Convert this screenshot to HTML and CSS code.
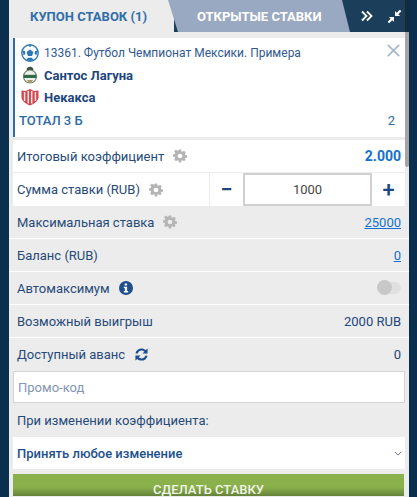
FILE: index.html
```html
<!DOCTYPE html>
<html lang="ru">
<head>
    <meta charset="utf-8" />
    <title>Купон ставок</title>
    <link rel="stylesheet" href="styles.css">
</head>
<body>
    <div class="panel">
        <div class="tabs">
            <div class="tab tab_active">КУПОН СТАВОК (1)</div>
            <div class="tab tab_open">ОТКРЫТЫЕ СТАВКИ</div>
            <div class="tab_tools">
                <svg class="tool_icon" viewBox="0 0 12 12"><path d="M1 1.500 5.500 6 1 10.500M6 1.500 10.500 6 6 10.500" fill="none" stroke="#fff" stroke-width="1.800"/></svg>
                <svg class="tool_icon tool_pin" viewBox="0 0 14 14"><path d="M7.500 6.500V1.800l1.600 1.600L12 .6l1.400 1.400-2.800 2.900 1.600 1.600zM6.500 7.500v4.700l-1.600-1.600L2 13.400.6 12l2.800-2.900-1.600-1.600z" fill="#fff"/></svg>
            </div>
        </div>

        <div class="coupon">
            <div class="coupon_line">
                <svg class="logo" viewBox="0 0 18 18">
                    <circle cx="9" cy="9" r="8.200" fill="#fff" stroke="#2a77b8" stroke-width="1.400"/>
                    <path d="M9 5.400 12.400 8l-1.300 3.900H6.900L5.600 8zM7 1.200 9 3.200l2-2zM1.500 6.500l2.400.6.500 2.700-1.800 1.700zM16.500 6.500l-2.400.6-.5 2.700 1.800 1.700zM5.400 15.800l1.800-2h3.600l1.800 2-3.600 1.200z" fill="#2a77b8"/>
                </svg>
                <span class="coupon_title">13361. Футбол Чемпионат Мексики. Примера</span>
            </div>
            <div class="coupon_line">
                <svg class="logo" viewBox="0 0 18 18">
                    <path d="M5.500 4.500C5.500 2 7 .8 9 .8s3.500 1.200 3.500 3.700z" fill="#3b4f3f"/>
                    <circle cx="9" cy="10.500" r="6.500" fill="#eef0ec" stroke="#6f8270" stroke-width="1.200"/>
                    <path d="M2.800 8.800h12.400v3.200H2.800z" fill="#2f6b46"/>
                    <path d="M6 14h6l-1.500 2.300h-3z" fill="#a89a5c"/>
                </svg>
                <span class="team">Сантос Лагуна</span>
            </div>
            <div class="coupon_line">
                <svg class="logo" viewBox="0 0 18 18">
                    <path d="M.5 2.500 5 3 9 1l4 2 4.500-.5v6.500c0 4-4 6.500-8.500 8.500C4.500 15.500.5 13 .5 9z" fill="#d6454c"/>
                    <path d="M3.600 4v9M7.300 3v12.500M10.700 3v12.500M14.400 4v9" stroke="#f4e6e6" stroke-width="1.500"/>
                </svg>
                <span class="team">Некакса</span>
            </div>
            <div class="coupon_total">
                <span>ТОТАЛ 3 Б</span>
                <span class="total_value">2</span>
            </div>
            <svg class="coupon_close" viewBox="0 0 13 13"><path d="M.8.8l11.400 11.400M12.200.8.800 12.200" stroke="#a8b9cc" stroke-width="1.800" fill="none"/></svg>
        </div>

        <div class="row row_white">
            <span class="row_label">Итоговый коэффициент
                <svg class="gear" viewBox="0 0 24 24"><use href="#gear"/></svg>
            </span>
            <span class="odds">2.000</span>
        </div>
        <div class="row row_white row_stake">
            <span class="row_label">Сумма ставки (RUB)
                <svg class="gear" viewBox="0 0 24 24"><use href="#gear"/></svg>
            </span>
            <div class="stepper">
                <span class="step">−</span>
                <span class="step_input">1000</span>
                <span class="step">+</span>
            </div>
        </div>
        <div class="row">
            <span class="row_label">Максимальная ставка
                <svg class="gear" viewBox="0 0 24 24"><use href="#gear"/></svg>
            </span>
            <a class="row_link" href="#">25000</a>
        </div>
        <div class="row">
            <span class="row_label">Баланс (RUB)</span>
            <a class="row_link" href="#">0</a>
        </div>
        <div class="row">
            <span class="row_label">Автомаксимум
                <svg class="info" viewBox="0 0 14 14">
                    <circle cx="7" cy="7" r="7" fill="#1c4f8c"/>
                    <path d="M5.700 2.500h2.400v2H5.700zM4.800 5.700h3.300v4.200h1.100v1.600H4.800V9.900h1.100V7.300H4.800z" fill="#fff"/>
                </svg>
            </span>
            <span class="toggle"><span class="toggle_knob"></span></span>
        </div>
        <div class="row">
            <span class="row_label">Возможный выигрыш</span>
            <span class="row_value">2000 RUB</span>
        </div>
        <div class="row row_last">
            <span class="row_label">Доступный аванс
                <svg class="refresh" viewBox="0 0 16 16">
                    <path d="M1.500 6.800C2.300 3.400 5 1.500 8 1.500c1.800 0 3.300.6 4.500 1.700L14.500 1.500v5.500H9l2-2C10.200 4.200 9.200 3.800 8 3.800c-1.900 0-3.400 1.200-3.900 3zM14.500 9.200c-.8 3.400-3.500 5.300-6.500 5.300-1.800 0-3.300-.6-4.500-1.700l-2 1.700V9H7l-2 2c.8.800 1.800 1.200 3 1.200 1.900 0 3.400-1.200 3.900-3z" fill="#1c4f8c"/>
                </svg>
            </span>
            <span class="row_value">0</span>
        </div>

        <div class="promo">Промо-код</div>
        <div class="change_label">При изменении коэффициента:</div>
        <div class="select">
            <span>Принять любое изменение</span>
            <svg class="select_arrow" viewBox="0 0 10 6"><path d="M1 1l4 4 4-4" fill="none" stroke="#5f6f80" stroke-width="1.200"/></svg>
        </div>
        <div class="submit">СДЕЛАТЬ СТАВКУ</div>

        <div class="scroll_thumb"></div>
    </div>

    <svg class="defs" width="0" height="0">
        <symbol id="gear" viewBox="0 0 24 24">
            <path fill-rule="evenodd" d="M10 1h4l.6 3.100 1.700.7L19 3l3 3-1.800 2.700.7 1.700 3.100.6v4l-3.100.6-.7 1.700L22 18l-3 3-2.700-1.800-1.700.7L14 23h-4l-.6-3.100-1.700-.7L5 21l-3-3 1.800-2.700-.7-1.700L0 13V9l3.100-.6.7-1.700L2 4l3-3 2.700 1.800 1.700-.7zM12 8a4 4 0 1 0 0 8 4 4 0 0 0 0-8z" fill="#b5b5b5"/>
        </symbol>
    </svg>
</body>
</html>
```

FILE: styles.css
```css
* {
    box-sizing: border-box;
}

html, body {
    height: 100%;
}

body {
    margin: 0;
    padding: 0 8px 0 9px;
    background-color: rgb(11, 47, 79);
    overflow: hidden;
    font-family: Roboto, "Liberation Sans", sans-serif;
    font-size: 13px;
    color: rgb(28, 70, 125);
}

.panel {
    position: relative;
    height: 100%;
    background-color: rgb(236, 236, 236);
    overflow: hidden;
}

.defs {
    position: absolute;
}

/* tabs */
.tabs {
    display: flex;
    height: 32px;
    background-color: rgb(27, 63, 90);
    font-weight: 700;
}

.tab {
    display: flex;
    align-items: center;
}

.tab_active {
    width: 165px;
    margin-right: -6px;
    padding-left: 21px;
    font-size: 13px;
    color: rgb(48, 110, 170);
    background-color: rgb(236, 236, 236);
}

.tab_open {
    width: 182px;
    padding-left: 29px;
    font-size: 13px;
    color: white;
    background-color: rgb(154, 169, 194);
    clip-path: polygon(0 0, 95.6% 0, 100% 100%, 5.5% 100%);
}

.tab_tools {
    display: flex;
    flex: 1;
    align-items: center;
    gap: 14px;
    padding-left: 11px;
}

.tool_icon {
    width: 12px;
    height: 12px;
}

.tool_pin {
    width: 15px;
    height: 15px;
}

/* coupon */
.coupon {
    position: relative;
    height: 99px;
    margin: 6px 4px 3px 4px;
    padding: 4px 10px 0 4px;
    background-color: white;
    border-left: 2px solid rgb(45, 110, 170);
}

.coupon_line {
    display: flex;
    align-items: center;
    gap: 5px;
    height: 22px;
    padding-left: 2px;
}

.logo {
    width: 18px;
    height: 18px;
    flex: none;
}

.coupon_title {
    font-size: 12px;
    color: rgb(48, 90, 145);
}

.team {
    font-size: 13px;
    font-weight: 700;
}

.coupon_total {
    display: flex;
    justify-content: space-between;
    margin-top: 5px;
    font-size: 13px;
    font-weight: 500;
    color: rgb(45, 105, 165);
}

.total_value {
    font-weight: 400;
}

.coupon_close {
    position: absolute;
    top: 6px;
    right: 5px;
    width: 13px;
    height: 13px;
}

/* rows */
.row {
    display: flex;
    align-items: center;
    justify-content: space-between;
    height: 33px;
    padding: 0 8px;
    border-bottom: 1px solid white;
}

.row_last {
    border-bottom: 0;
}

.row_white {
    margin: 0 4px;
    padding: 0 4px;
    background-color: white;
    border-bottom: 1px solid rgb(236, 236, 236);
}

.row_label {
    display: flex;
    align-items: center;
    gap: 9px;
    color: rgb(38, 74, 122);
}

.gear {
    width: 14px;
    height: 14px;
}

.info {
    width: 14px;
    height: 14px;
}

.refresh {
    width: 15px;
    height: 15px;
}

.odds {
    font-size: 14px;
    font-weight: 700;
    color: rgb(21, 112, 205);
}

.row_link {
    color: rgb(21, 112, 205);
}

.row_value {
    color: rgb(28, 70, 125);
}

/* stepper */
.row_stake {
    padding-right: 0;
    border-bottom: 0;
}

.stepper {
    display: flex;
    align-self: stretch;
    width: 196px;
    border-left: 1px solid rgb(236, 236, 236);
}

.step {
    display: flex;
    flex: 1;
    align-items: center;
    justify-content: center;
    font-size: 22px;
    font-weight: 500;
    color: rgb(28, 70, 125);
}

.step_input {
    display: flex;
    align-items: center;
    justify-content: center;
    width: 129px;
    border: 2px solid rgb(208, 208, 208);
    color: rgb(70, 70, 70);
    font-size: 13px;
}

/* toggle */
.toggle {
    position: relative;
    width: 24px;
    height: 12px;
    border-radius: 6px;
    background-color: rgb(224, 224, 224);
}

.toggle_knob {
    position: absolute;
    top: -2px;
    left: 0;
    width: 15px;
    height: 15px;
    border-radius: 50%;
    background-color: rgb(200, 200, 200);
}

/* bottom form */
.promo {
    display: flex;
    align-items: center;
    height: 32px;
    margin: 0 4px;
    padding: 0 4px;
    background-color: white;
    border: 1px solid rgb(212, 212, 212);
    color: rgb(130, 150, 178);
}

.change_label {
    display: flex;
    align-items: center;
    height: 34px;
    padding: 0 8px;
    color: rgb(38, 74, 122);
}

.select {
    display: flex;
    align-items: center;
    justify-content: space-between;
    height: 32px;
    margin: 0 4px;
    padding: 0 4px;
    background-color: white;
    font-weight: 500;
    color: rgb(28, 80, 140);
}

.select_arrow {
    width: 8px;
    height: 5px;
    margin-right: -1px;
}

.submit {
    height: 22px;
    margin: 5px 5px 0 4px;
    padding-top: 10px;
    line-height: 12px;
    background: linear-gradient(rgb(139, 177, 76) 13px, rgb(100, 130, 58) 22px);
    color: rgb(240, 244, 230);
    font-weight: 500;
    text-align: center;
}

.scroll_thumb {
    position: absolute;
    top: 0;
    right: 0;
    width: 4px;
    height: 167px;
    border-radius: 0 0 2px 2px;
    background-color: rgba(0, 0, 0, 0.3);
}
```
